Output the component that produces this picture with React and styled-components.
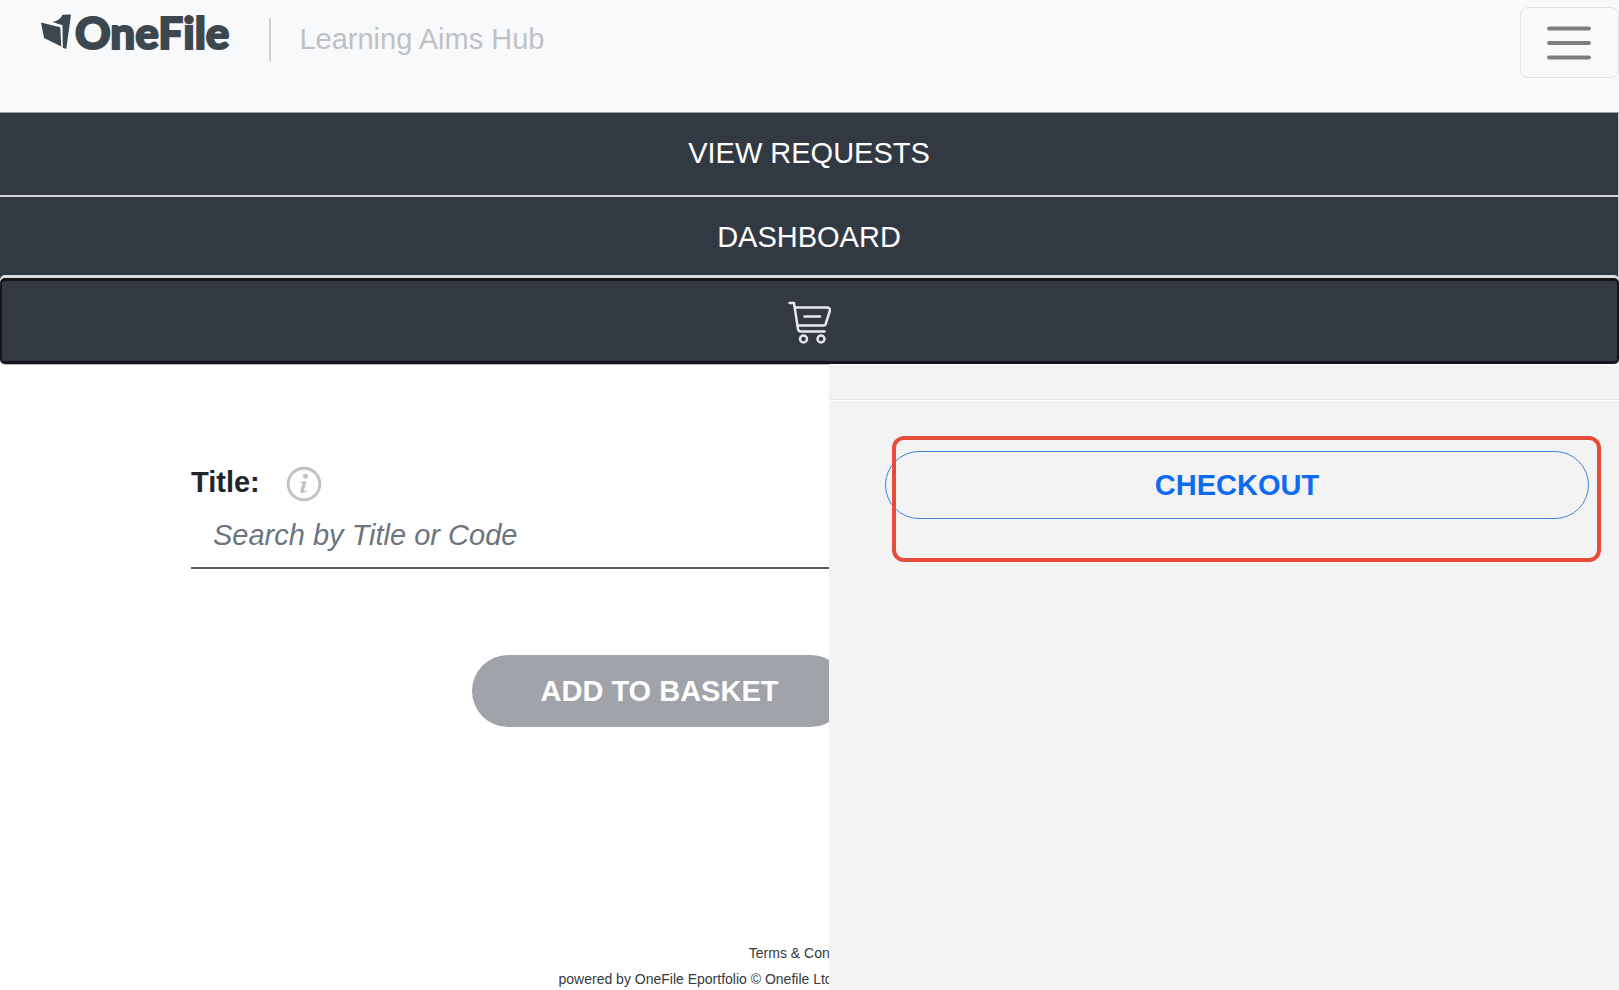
import React from "react";
import styled, { createGlobalStyle } from "styled-components";

const GlobalStyle = createGlobalStyle`
  * {
    box-sizing: border-box;
  }
  body {
    margin: 0;
    background: #fff;
    color: #212529;
    font-family: "Liberation Sans", Arial, sans-serif;
    font-size: 29px;
  }
  button, input {
    font: inherit;
  }
`;

const Page = styled.div`
  min-height: 100vh;
  display: flex;
  flex-direction: column;
  overflow: hidden;
`;

const Header = styled.header`
  height: 113px;
  display: flex;
  align-items: flex-start;
  padding-left: 41px;
  background: #f8f9fb;
  border-bottom: 1px solid #9a9fa4;
`;

const Brand = styled.a`
  display: flex;
  gap: 3px;
  padding-top: 14px;
  color: #3d474f;
  text-decoration: none;
`;

const Wordmark = styled.span`
  font-family: Lato, "Liberation Sans", sans-serif;
  font-size: 44px;
  font-weight: 900;
  line-height: 36px;
  -webkit-text-stroke: 2px currentColor;
`;

const ProductName = styled.span`
  height: 43px;
  margin: 18px 0 0 40px;
  padding-left: 28px;
  border-left: 2px solid #d0d1d3;
  line-height: 43px;
  color: #bfc1c4;
`;

const MenuButton = styled.button`
  width: 99px;
  height: 71px;
  margin: 7px 0 0 auto;
  padding: 0;
  display: grid;
  place-items: center;
  background: transparent;
  border: 1px solid #e2e3e5;
  border-radius: 8px;
`;

const NavList = styled.nav`
  display: flex;
  flex-direction: column;
`;

const NavLink = styled.a`
  height: 84px;
  padding-top: 19px;
  background: #333943;
  border-bottom: 2px solid #d3d4d7;
  border-right: 1px solid #c9cbce;
  color: #fff;
  line-height: 42px;
  text-align: center;
  text-decoration: none;
`;

const CartButton = styled.button`
  position: relative;
  height: 86px;
  margin-top: -3px;
  padding: 4px 0 0;
  display: grid;
  place-items: center;
  background: #333943;
  border: solid #14161a;
  border-width: 3px 2px;
  border-radius: 5px;
  box-shadow: 0 -3px 0 #dcdcde, 0 1px 0 #b5b5b5;
`;

const Content = styled.div`
  position: relative;
  flex: 1;
  display: flex;
  flex-direction: column;
`;

const SearchForm = styled.form`
  display: flex;
  flex-direction: column;
  margin: 96px 191px 0;
`;

const LabelRow = styled.div`
  height: 44px;
  display: flex;
  align-items: center;
  gap: 26px;
`;

const Label = styled.label`
  font-weight: 700;
  line-height: 40px;
`;

const InfoButton = styled.button`
  display: flex;
  padding: 4px 0 0;
  background: none;
  border: 0;
`;

const SearchInput = styled.input`
  height: 65px;
  padding: 0 22px;
  background: transparent;
  border: 0;
  border-bottom: 2px solid #5f6265;
  outline: 0;
  font-style: italic;

  &::placeholder {
    color: #6c757d;
    opacity: 1;
  }
`;

const PillButton = styled.button`
  border-radius: 36px;
  font-weight: 700;
  text-transform: uppercase;
`;

const AddButton = styled(PillButton)`
  width: 375px;
  height: 72px;
  margin: 86px 0 0 281px;
  background: #a0a4aa;
  border: 0;
  color: #fff;
`;

const Footer = styled.footer`
  margin-top: auto;
  display: flex;
  flex-direction: column;
  align-items: center;
  gap: 4px;
  color: #343a40;
  font-size: 14px;
  line-height: 22px;
`;

const FooterLink = styled.a`
  color: inherit;
  text-decoration: none;
`;

const FooterNote = styled.p`
  width: 502px;
  margin: 0;
`;

const BasketPanel = styled.aside`
  position: absolute;
  top: 0;
  right: 0;
  bottom: 0;
  width: 48.8%;
  background: #f3f3f3;
`;

const BasketHeader = styled.div`
  height: 37px;
  border-top: 2px solid #f9f9f9;
  border-bottom: 1px solid #fff;
  box-shadow: inset 0 -1px 0 #e6e6e6;
`;

const BasketActions = styled.div`
  display: flex;
  padding: 50px 30px 0 56px;
`;

const CheckoutButton = styled(PillButton)`
  flex: 1;
  height: 68px;
  background: transparent;
  border: 1px solid #3f83d6;
  color: #0d6bef;
`;

const Highlight = styled.div`
  position: absolute;
  top: 72px;
  left: 63px;
  right: 18px;
  height: 126px;
  border: 4px solid #e64d39;
  border-radius: 12px;
  pointer-events: none;
`;

const LogoMark = () => (
  <svg width="31" height="36" viewBox="0 0 31 36" fill="currentColor" aria-hidden="true">
    <path d="M0 8.600 L19.300 13.200 L20.200 32.500 L3 24 Z" />
    <path d="M11.500 8 Q19.500 6.500 21.500 0.800 L30 0.400 L25.300 35 L21.800 33.700 L21.500 11.200 Z" />
  </svg>
);

const BarsIcon = () => (
  <svg width="45" height="34" viewBox="0 0 45 34" stroke="#7d7d7e" strokeWidth="3.800" strokeLinecap="round" aria-hidden="true">
    <path d="M2 2.500 H42 M2 17 H42 M2 31.500 H42" />
  </svg>
);

const CartIcon = () => (
  <svg width="44" height="44" viewBox="0 0 44 44" fill="none" stroke="#e6e7ea" strokeWidth="2.500" strokeLinecap="round" strokeLinejoin="round" aria-hidden="true">
    <path d="M1.500 2 H6 L10 28 Q10.500 30.500 13 30.500 H36.500" />
    <path d="M7 6.500 H38.500 Q42.500 6.500 41.800 10 L37.500 23.500 Q37 24.500 36 24.500 H9.500" />
    <path d="M16.500 15.500 H32" />
    <circle cx="15.500" cy="38" r="3.500" />
    <circle cx="33" cy="38" r="3.500" />
  </svg>
);

const InfoIcon = () => (
  <svg width="36" height="36" viewBox="0 0 36 36" aria-hidden="true">
    <circle cx="18" cy="18" r="15.800" fill="none" stroke="#bfc1c3" strokeWidth="2.900" />
    <circle cx="19.500" cy="10.300" r="2.500" fill="#bfc1c3" />
    <path d="M14 15.700 L20.500 15 L18 24.500 Q18 25.800 21 24.300 L20.600 25.800 Q14 29 14.300 25 L16.300 17.500 Q16.300 16.500 14 16.600 Z" fill="#bfc1c3" />
  </svg>
);

const App = () => (
  <Page>
    <GlobalStyle />
    <Header>
      <Brand href="#">
        <LogoMark />
        <Wordmark>OneFile</Wordmark>
      </Brand>
      <ProductName>Learning Aims Hub</ProductName>
      <MenuButton type="button" aria-label="Toggle navigation">
        <BarsIcon />
      </MenuButton>
    </Header>
    <NavList>
      <NavLink href="#requests">VIEW REQUESTS</NavLink>
      <NavLink href="#dashboard">DASHBOARD</NavLink>
      <CartButton type="button" aria-label="Basket">
        <CartIcon />
      </CartButton>
    </NavList>
    <Content>
      <SearchForm>
        <LabelRow>
          <Label htmlFor="title">Title:</Label>
          <InfoButton type="button" aria-label="Title help">
            <InfoIcon />
          </InfoButton>
        </LabelRow>
        <SearchInput id="title" type="text" placeholder="Search by Title or Code" />
        <AddButton type="button">Add to basket</AddButton>
      </SearchForm>
      <Footer>
        <FooterLink href="#terms">Terms &amp; Conditions</FooterLink>
        <FooterNote>powered by OneFile Eportfolio © Onefile Ltd</FooterNote>
      </Footer>
      <BasketPanel>
        <BasketHeader />
        <BasketActions>
          <CheckoutButton type="button">Checkout</CheckoutButton>
        </BasketActions>
        <Highlight />
      </BasketPanel>
    </Content>
  </Page>
);

export default App;
